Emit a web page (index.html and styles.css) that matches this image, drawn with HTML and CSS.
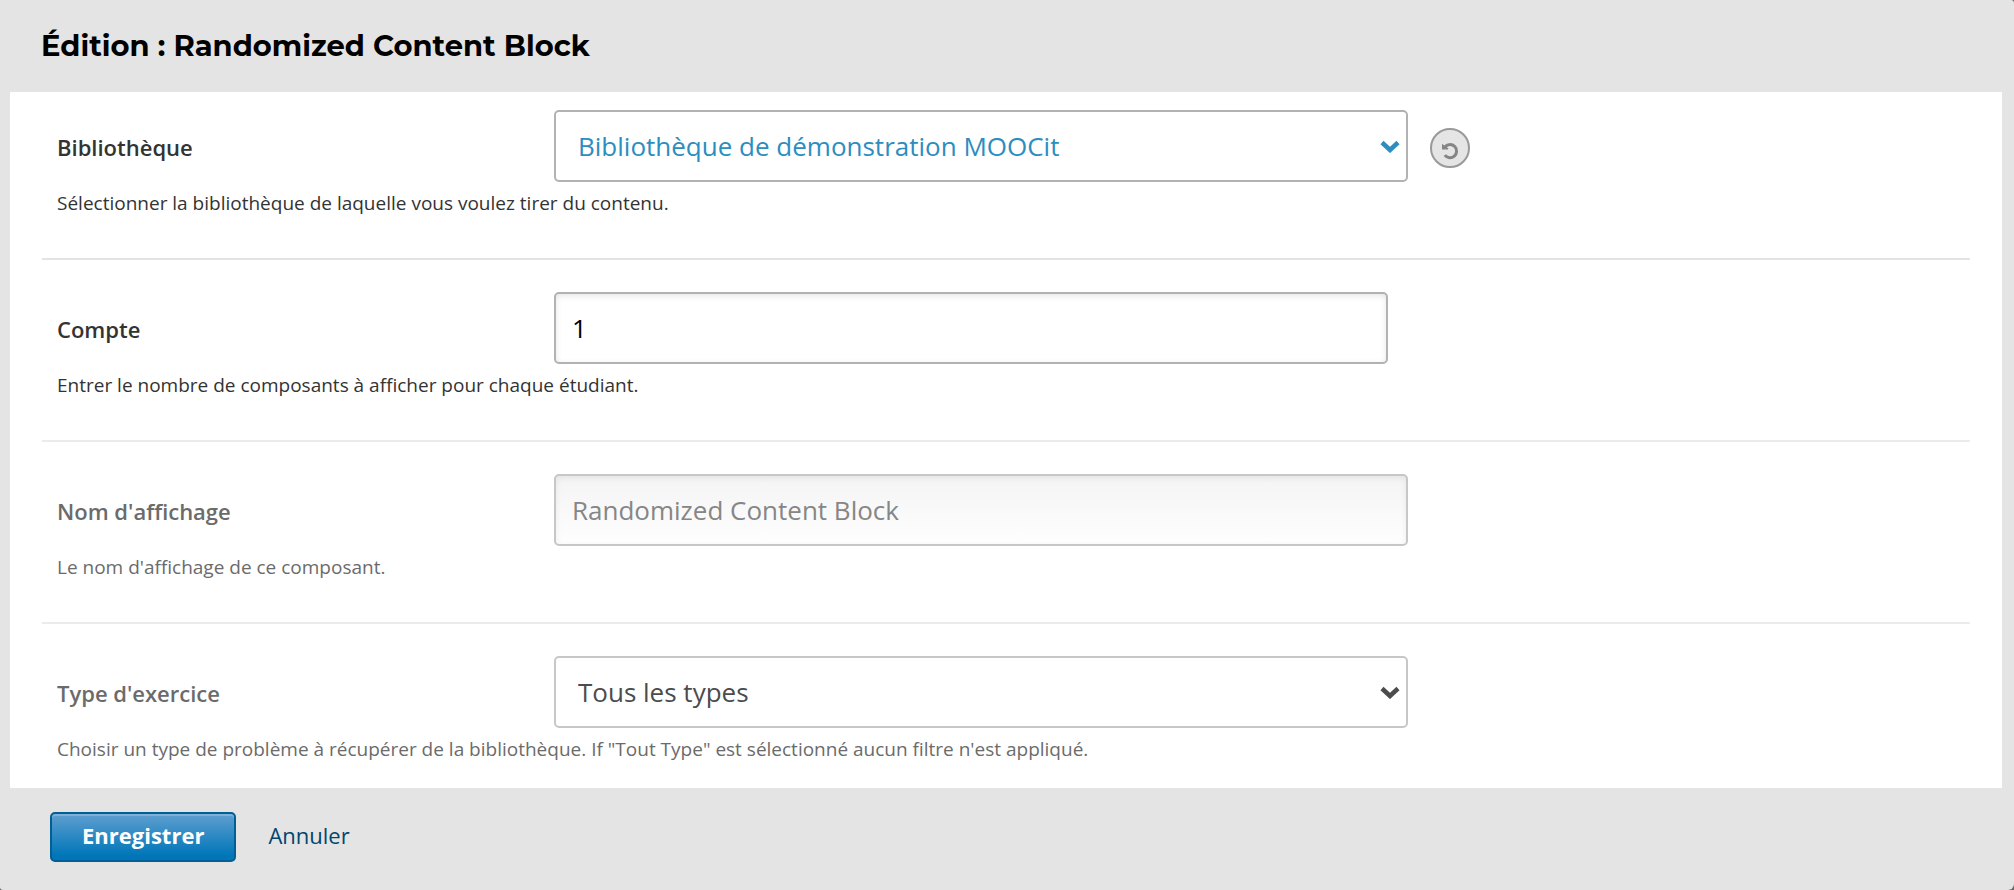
FILE: index.html
```html
<!DOCTYPE html>
<html lang="fr">
<head>
<meta charset="utf-8">
<meta name="viewport" content="width=device-width, initial-scale=1">
<title>Édition : Randomized Content Block</title>
<link rel="stylesheet" href="styles.css">
</head>
<body>
<form class="editor">
  <header class="editor-header">
    <h1 class="editor-title">Édition : Randomized Content Block</h1>
  </header>
  <main class="editor-panel">
    <div class="field is-set">
      <label class="field-label" for="library">Bibliothèque</label>
      <div class="select-wrap">
        <select class="control control-select" id="library" aria-describedby="library-help">
          <option>Bibliothèque de démonstration MOOCit</option>
        </select>
        <svg class="chevron" viewBox="0 0 20 13" aria-hidden="true"><path d="M2 2.5L10 10L18 2.5"/></svg>
      </div>
      <button class="reset" type="button" aria-label="Effacer">
        <svg class="reset-icon" viewBox="0 0 18 18" aria-hidden="true"><path class="reset-arc" d="M4.2 4.6A6.6 6.6 0 1 1 3.8 13.2"/><path class="reset-head" d="M1 1.8V7.6H7.2V6.2Z"/></svg>
      </button>
      <p class="help" id="library-help">Sélectionner la bibliothèque de laquelle vous voulez tirer du contenu.</p>
    </div>
    <div class="field is-set">
      <label class="field-label" for="count">Compte</label>
      <input class="control control-number" id="count" type="number" value="1" aria-describedby="count-help">
      <p class="help" id="count-help">Entrer le nombre de composants à afficher pour chaque étudiant.</p>
    </div>
    <div class="field">
      <label class="field-label" for="name">Nom d'affichage</label>
      <input class="control control-text" id="name" type="text" value="Randomized Content Block" aria-describedby="name-help">
      <p class="help" id="name-help">Le nom d'affichage de ce composant.</p>
    </div>
    <div class="field">
      <label class="field-label" for="type">Type d'exercice</label>
      <div class="select-wrap">
        <select class="control control-select" id="type" aria-describedby="type-help">
          <option>Tous les types</option>
        </select>
        <svg class="chevron" viewBox="0 0 20 13" aria-hidden="true"><path d="M2 2.5L10 10L18 2.5"/></svg>
      </div>
      <p class="help" id="type-help">Choisir un type de problème à récupérer de la bibliothèque. If "Tout Type" est sélectionné aucun filtre n'est appliqué.</p>
    </div>
  </main>
  <footer class="editor-footer">
    <button class="save" type="submit">Enregistrer</button>
    <a class="cancel" href="#">Annuler</a>
  </footer>
</form>
</body>
</html>
```
FILE: styles.css
```css
* {
  box-sizing: border-box;
}

html {
  background: #666;
}

body {
  margin: 0;
  font-family: "Open Sans", "Noto Sans", sans-serif;
}

.editor {
  display: flex;
  flex-direction: column;
  min-height: 100vh;
  background: #e4e4e4;
  border-radius: 0 3px 6px 3px;
}

.editor-header {
  padding: 26px 41px;
}

.editor-title {
  margin: 0;
  font-family: Montserrat, Inter, sans-serif;
  font-size: 29px;
  font-weight: 700;
  line-height: 40px;
  color: #000;
}

.editor-panel {
  flex: 1;
  margin: 0 12px 0 10px;
  padding: 0 32px;
  background: #fff;
}

.field {
  display: grid;
  grid-template-columns: 497fr 854fr 562fr;
  align-items: center;
  row-gap: 8px;
  padding: 32px 0 42px 15px;
  border-bottom: 2px solid #ebebeb;
  color: #6b6b6b;
}

.field:first-child {
  padding-top: 18px;
  border-bottom-color: #e3e3e3;
}

.field:last-child {
  padding-bottom: 26px;
  border-bottom: 0;
}

.field-label {
  padding-top: 2px;
  font-size: 22px;
  font-weight: 600;
  line-height: 32px;
}

.help {
  grid-column: 1 / -1;
  margin: 0;
  font-size: 19px;
  line-height: 26px;
}

.is-set {
  color: #333;
}

.control {
  display: block;
  width: 100%;
  height: 72px;
  padding: 0 16px;
  border: 2px solid #c7c7c7;
  border-radius: 5px;
  background: #fff;
  font-family: inherit;
  font-size: 26px;
  color: #4c4c4c;
}

.is-set .control {
  border-color: #b2b2b2;
}

.control-select {
  appearance: none;
  padding: 0 48px 0 22px;
}

.is-set .control-select,
.is-set .chevron {
  color: #2c8dc0;
}

.control-number {
  appearance: textfield;
  width: calc(100% - 20px);
  box-shadow: inset 0 2px 6px rgba(0, 0, 0, 0.1);
}

.is-set .control-number {
  color: #000;
}

.control-number::-webkit-inner-spin-button {
  display: none;
}

.control-text {
  background: linear-gradient(#f4f4f4, #fefefe);
  box-shadow: inset 0 2px 6px rgba(0, 0, 0, 0.07);
  color: #868686;
}

.select-wrap {
  position: relative;
}

.chevron {
  position: absolute;
  top: 30px;
  right: 8px;
  width: 20px;
  height: 13px;
  fill: none;
  stroke: currentColor;
  stroke-width: 4.5;
  color: #4c4c4c;
  pointer-events: none;
}

.reset {
  display: flex;
  align-items: center;
  justify-content: center;
  width: 40px;
  height: 40px;
  margin: 4px 0 0 22px;
  padding: 6px 0 0;
  border: 2px solid #999;
  border-radius: 50%;
  background: #e5e5e5;
  color: #858585;
}

.reset-icon {
  width: 18px;
  height: 18px;
}

.reset-arc {
  fill: none;
  stroke: currentColor;
  stroke-width: 3;
}

.reset-head {
  fill: currentColor;
}

.editor-footer {
  display: flex;
  align-items: center;
  gap: 32px;
  padding: 24px 50px 28px;
}

.save {
  height: 50px;
  padding: 0 30px 4px;
  border: 2px solid #005f94;
  border-radius: 5px;
  background: linear-gradient(#5f9fd0, #0076b8 90%);
  box-shadow: inset 0 2px 0 #7fb2d6;
  font-family: inherit;
  font-size: 22px;
  font-weight: 700;
  color: #fff;
}

.cancel {
  padding-bottom: 4px;
  font-size: 22px;
  line-height: 32px;
  color: #00466e;
  text-decoration: none;
}
```
